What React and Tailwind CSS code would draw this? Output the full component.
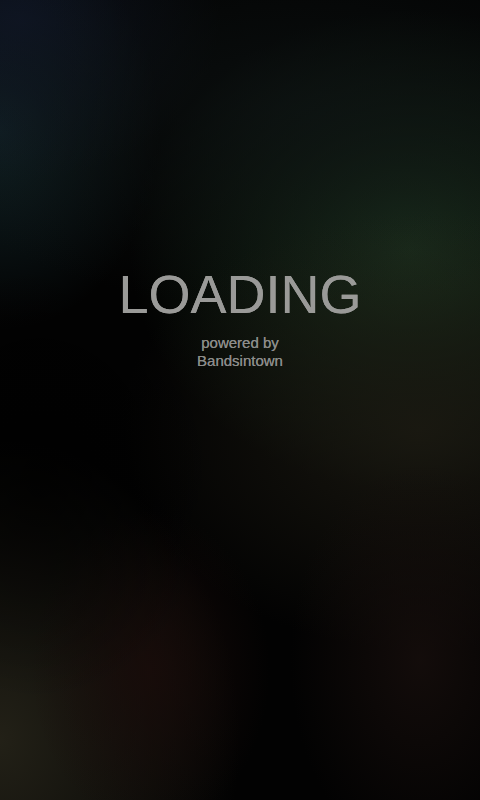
import React from 'react';

const App = () => {
  return (
    <div
      className="relative w-[480px] h-[800px] overflow-hidden bg-[#020202]"
      style={{ fontFamily: '"Liberation Sans", Arial, sans-serif' }}
    >
      {/* Blurred background glows */}
      <div className="absolute inset-0 bg-[radial-gradient(ellipse_280px_240px_at_410px_250px,rgba(30,52,32,0.9),transparent)]" />
      <div className="absolute inset-0 bg-[radial-gradient(ellipse_160px_200px_at_0px_130px,rgba(18,36,40,0.9),transparent)]" />
      <div className="absolute inset-0 bg-[radial-gradient(ellipse_200px_160px_at_20px_20px,rgba(16,22,40,0.8),transparent)]" />
      <div className="absolute inset-0 bg-[radial-gradient(ellipse_420px_200px_at_300px_110px,rgba(14,20,20,0.7),transparent)]" />
      <div className="absolute inset-0 bg-[radial-gradient(ellipse_300px_220px_at_420px_430px,rgba(28,26,18,0.85),transparent)]" />
      <div className="absolute inset-0 bg-[radial-gradient(ellipse_240px_300px_at_0px_740px,rgba(36,34,24,0.95),transparent)]" />
      <div className="absolute inset-0 bg-[radial-gradient(ellipse_120px_160px_at_150px_670px,rgba(26,12,10,0.8),transparent)]" />
      <div className="absolute inset-0 bg-[radial-gradient(ellipse_130px_200px_at_420px_660px,rgba(22,14,12,0.85),transparent)]" />
      <div className="absolute inset-0 bg-[radial-gradient(ellipse_180px_220px_at_40px_480px,rgba(0,0,0,0.7),transparent)]" />

      <div className="relative flex flex-col items-center pt-[264px]">
        <h1 className="text-[54px] leading-[60px] text-[#9a9a98] [text-shadow:0_0_0.6px_#9a9a98]">LOADING</h1>
        <p className="mt-[10px] text-[15px] leading-[18px] text-[#8c8c8a] text-center [text-shadow:0_0_0.4px_#8c8c8a]">
          powered by
          <br />
          Bandsintown
        </p>
      </div>
    </div>
  );
};

export default App;
